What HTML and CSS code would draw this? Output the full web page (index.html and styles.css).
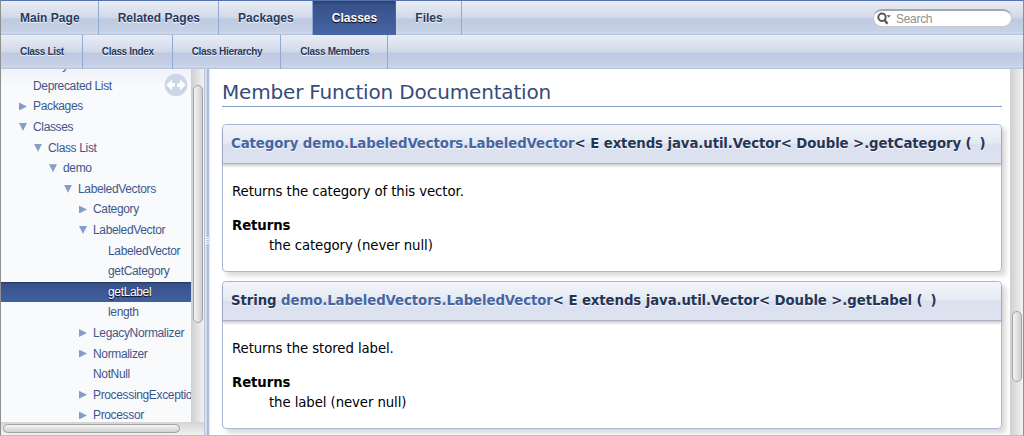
FILE: index.html
```html
<!DOCTYPE html>
<html lang="en">

<head>
	<meta charset="UTF-8" />
	<meta name="viewport" content="width=device-width, initial-scale=1.0" />
	<title>demo.LabeledVectors.LabeledVector</title>
	<link rel="stylesheet" href="styles.css">
</head>

<body>
	<div class="tabs">
		<ul class="tablist">
			<li><a>Main Page</a></li>
			<li><a>Related Pages</a></li>
			<li><a>Packages</a></li>
			<li class="current"><a>Classes</a></li>
			<li><a>Files</a></li>
		</ul>
		<div class="search">
			<svg width="16" height="14" viewBox="0 0 16 14">
				<circle cx="5" cy="5.2" r="3.7" fill="none" stroke="#555" stroke-width="2" />
				<path d="M7.5 8L10.5 11.7" stroke="#555" stroke-width="2.3" />
				<path d="M9.6 3.2H13.8L11.7 5.5Z" fill="#555" />
			</svg>
			<span>Search</span>
		</div>
	</div>
	<div class="tabs tabs2">
		<ul class="tablist">
			<li><a>Class List</a></li>
			<li><a>Class Index</a></li>
			<li><a>Class Hierarchy</a></li>
			<li><a>Class Members</a></li>
		</ul>
	</div>

	<div class="main">
		<div class="side-nav">
			<div class="nav-row">
				<div class="nav-tree">
					<ul>
						<li class="l1"><span>History</span></li>
						<li class="l1"><span>Deprecated List</span></li>
						<li class="l1 closed"><span>Packages</span></li>
						<li class="l1 open"><span>Classes</span></li>
						<li class="l2 open"><span>Class List</span></li>
						<li class="l3 open"><span>demo</span></li>
						<li class="l4 open"><span>LabeledVectors</span></li>
						<li class="l5 closed"><span>Category</span></li>
						<li class="l5 open"><span>LabeledVector</span></li>
						<li class="l6"><span>LabeledVector</span></li>
						<li class="l6"><span>getCategory</span></li>
						<li class="l6 selected"><span>getLabel</span></li>
						<li class="l6"><span>length</span></li>
						<li class="l5 closed"><span>LegacyNormalizer</span></li>
						<li class="l5 closed"><span>Normalizer</span></li>
						<li class="l5"><span>NotNull</span></li>
						<li class="l5 closed"><span>ProcessingException</span></li>
						<li class="l5 closed"><span>Processor</span></li>
					</ul>
					<svg class="sync" width="24" height="24" viewBox="0 0 24 24">
						<circle cx="12" cy="12" r="11.3" fill="#cdd6e9" />
						<path d="M2.2 12L8 6.6V10H11V14H8V17.4Z" fill="#fff" />
						<path d="M21.8 12L16 6.6V10H13V14H16V17.4Z" fill="#fff" />
						<path d="M10.5 15L13.8 9" stroke="#cdd6e9" stroke-width="1.8" />
					</svg>
				</div>
				<div class="vscroll"><div class="thumb"></div></div>
			</div>
			<div class="hscroll"><div class="thumb"></div></div>
		</div>
		<div class="splitbar">
			<i></i><i></i><i></i><i></i>
		</div>
		<div class="contents">
			<h2>Member Function Documentation</h2>

			<div class="memitem">
				<div class="memproto"><a>Category</a> <a>demo.LabeledVectors.LabeledVector</a>&lt; E extends java.util.Vector&lt; Double &gt;.getCategory <span class="paren">(</span><span>)</span></div>
				<div class="memdoc">
					<p>Returns the category of this vector.</p>
					<dl>
						<dt>Returns</dt>
						<dd>the category (never null)</dd>
					</dl>
				</div>
			</div>

			<div class="memitem">
				<div class="memproto">String <a>demo.LabeledVectors.LabeledVector</a>&lt; E extends java.util.Vector&lt; Double &gt;.getLabel <span class="paren">(</span><span>)</span></div>
				<div class="memdoc">
					<p>Returns the stored label.</p>
					<dl>
						<dt>Returns</dt>
						<dd>the label (never null)</dd>
					</dl>
				</div>
			</div>
		</div>
		<div class="vscroll page-scroll"><div class="thumb"></div></div>
	</div>
</body>

</html>
```
FILE: styles.css
```css
* {
	box-sizing: border-box;
}

body {
	margin: 0;
	height: 436px;
	overflow: hidden;
	display: flex;
	flex-direction: column;
	border: 1px solid #909090;
	border-top-color: #5373b4;
	border-bottom-color: #b4bfd8;
	background: #fff;
	font-family: "DejaVu Sans", sans-serif;
	font-size: 13.3px;
	letter-spacing: -0.09px;
}

ul,
dl,
dd,
p,
h2 {
	margin: 0;
	padding: 0;
	list-style: none;
}

/* tabs */
.tabs {
	display: flex;
	flex: none;
	justify-content: space-between;
	height: 34px;
	background: linear-gradient(#e9edf5 0, #d0d8e8 17px, #bdc9e1 18px, #c7d2e7 31px, #d5dded 32px, #b8c5df 33px, #b8c5df 34px);
	font-family: "Liberation Sans", sans-serif;
	font-size: 12px;
	letter-spacing: 0.03px;
	font-weight: bold;
	color: #283a5d;
	text-shadow: 0 1px 1px rgba(255, 255, 255, 0.9);
}

.tablist {
	display: flex;
}

.tablist li {
	padding: 0 18px 0 19px;
	line-height: 35px;
	border-right: 1px solid #93a8d2;
	white-space: nowrap;
}

.tablist .current {
	color: #fff;
	background: linear-gradient(#2c4069 0, #38528a 4px, #4665a2 33px);
	border-color: #4665a2;
	text-shadow: 0 1px 1px #000;
}

.tabs2 {
	font-size: 10px;
	letter-spacing: -0.34px;
}

.tabs2 .tablist li {
	line-height: 33px;
}

.search {
	display: flex;
	align-items: center;
	width: 139px;
	height: 18px;
	margin: 8px 11px 0 0;
	padding-left: 3px;
	gap: 3px;
	border-radius: 9px;
	border: 1px solid #c5c8ce;
	border-top: 2px solid #a5a7ac;
	background: #fff;
	font-size: 12px;
	letter-spacing: -0.3px;
	font-weight: normal;
	color: #909090;
}

/* page body */
.main {
	display: flex;
	flex: 1;
	min-height: 0;
}

.side-nav {
	display: flex;
	flex-direction: column;
	width: 203px;
}

.nav-row {
	display: flex;
	flex: 1;
	min-height: 0;
}

.nav-tree {
	position: relative;
	width: 190px;
	overflow: hidden;
	background: linear-gradient(#eff2f8 0, #f9fafc 16px);
	font: 12px "Liberation Sans", sans-serif;
	letter-spacing: -0.35px;
	color: #3d578c;
}

.nav-tree ul {
	margin-top: -14px;
}

.nav-tree li {
	display: flex;
	align-items: center;
	height: 20.6px;
	white-space: nowrap;
}

.nav-tree li::before {
	content: "";
	flex: none;
	width: 8px;
	height: 8px;
	margin-right: 6px;
}

.nav-tree .open::before {
	background: #869dca;
	clip-path: polygon(0 0, 100% 0, 50% 100%);
}

.nav-tree .closed::before {
	background: #869dca;
	clip-path: polygon(0 0, 100% 50%, 0 100%);
}

.l1 { padding-left: 18px; }
.l2 { padding-left: 33px; }
.l3 { padding-left: 48px; }
.l4 { padding-left: 63px; }
.l5 { padding-left: 78px; }
.l6 { padding-left: 93px; }

.nav-tree .selected {
	background: linear-gradient(#22345a 0, #38528a 2px, #4160a0 100%);
	color: #fff;
	text-shadow: 0 1px 1px #000;
}

/* synchronise button over the tree */
.sync {
	position: absolute;
	top: 4px;
	right: 3px;
}

.vscroll {
	width: 13px;
	padding: 16px 1px 0;
	background: linear-gradient(90deg, #cfcfcf, #f2f2f2);
}

.thumb {
	border: 1px solid #a2a2a2;
	border-radius: 5px;
}

.vscroll .thumb {
	width: 10px;
	height: 238px;
	margin-left: 1px;
	background: linear-gradient(90deg, #f4f4f4, #cfcfcf);
}

.hscroll {
	height: 13px;
	padding: 2px 2px;
	background: linear-gradient(#d4d4d4, #f2f2f2);
}

.hscroll .thumb {
	width: 177px;
	height: 9px;
	background: linear-gradient(#f6f6f6, #cfcfcf);
}

.splitbar {
	display: flex;
	flex-direction: column;
	align-items: center;
	padding-top: 168px;
	gap: 1px;
	width: 6px;
	background: linear-gradient(90deg, #b5c2df 0, #b5c2df 1px, #e3e9f5 1px, #cbd5ea 3px, #a9b8da 3px, #b5c3e1 5px, #e3e8f4 5px);
}

.splitbar i {
	width: 4px;
	height: 1px;
	background: #eef2fa;
}

.contents {
	flex: 1;
	min-width: 0;
	overflow: hidden;
	padding: 11px 8px 0 12px;
	color: #000;
}

h2 {
	height: 27px;
	margin-bottom: 17px;
	border-bottom: 1px solid #879ecb;
	font-size: 20px;
	letter-spacing: -0.18px;
	font-weight: normal;
	line-height: 24px;
	color: #354c7b;
}

.memitem {
	height: 148px;
	margin-bottom: 9px;
	border: 1px solid #a8b8d9;
	border-radius: 4px;
	box-shadow: 4px 4px 5px rgba(0, 0, 0, 0.15);
}

.memproto {
	height: 39px;
	padding-left: 8px;
	border-bottom: 1px solid #a9b0c0;
	border-radius: 4px 4px 0 0;
	background: linear-gradient(#f3f5fa 0, #e4e9f3 18px, #dae0ee 19px, #dee3f0 100%);
	box-shadow: 0 2px 3px rgba(0, 0, 0, 0.2);
	font-weight: bold;
	line-height: 37px;
	white-space: nowrap;
	color: #253555;
	text-shadow: 0 1px 1px rgba(255, 255, 255, 0.9);
}

.memproto a {
	color: #4665a2;
}

.paren {
	margin-right: 8px;
}

.memdoc {
	padding: 18px 9px 0;
	line-height: 20px;
}

.memdoc dl {
	margin-top: 14px;
}

.memdoc dt {
	font-weight: bold;
}

.memdoc dd {
	margin-left: 37px;
}

.page-scroll {
	padding-top: 242px;
}

.page-scroll .thumb {
	height: 71px;
}
```
